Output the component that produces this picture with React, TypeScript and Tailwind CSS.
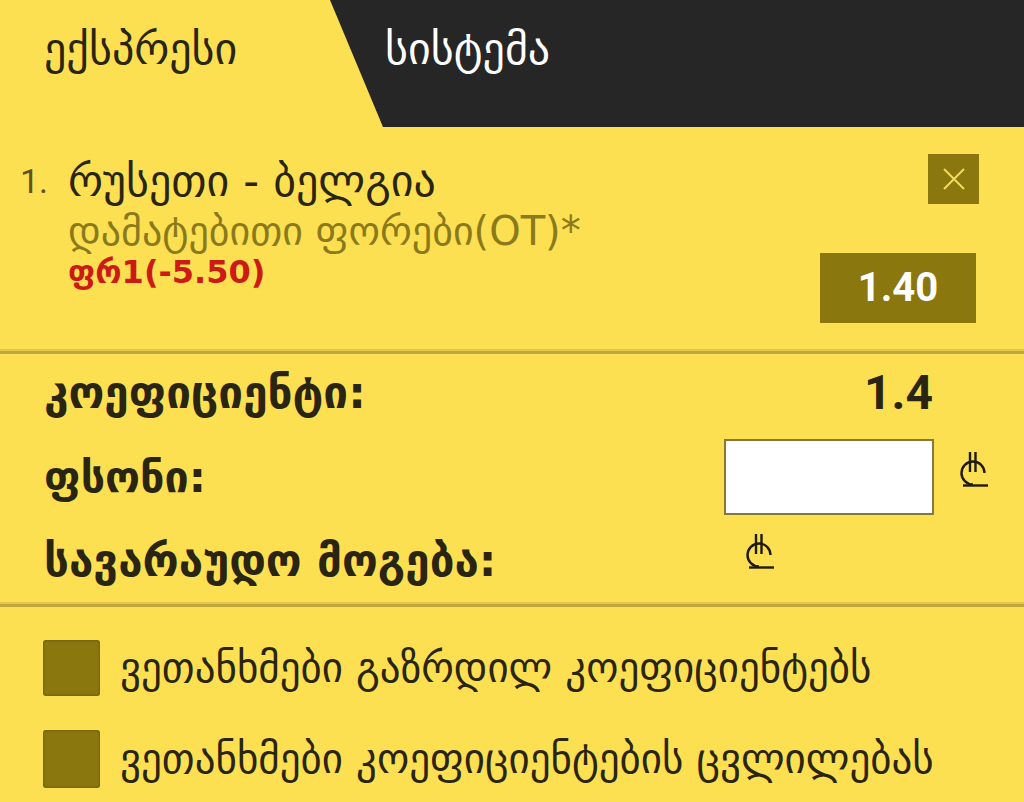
import React from "react";

const geo = { fontFamily: '"DejaVu Sans", sans-serif' };
const lat = { fontFamily: 'Roboto, "DejaVu Sans", sans-serif' };

function Lari({ className }: { className?: string }) {
  return (
    <svg className={className} viewBox="0 0 34 36" fill="none" stroke="#1e1a08" strokeWidth="2.4" strokeLinecap="butt">
      <path d="M28.5 22 A11.5 11.5 0 1 0 17 33.5" />
      <path d="M14 1 V21" />
      <path d="M19.5 1 V21" />
      <path d="M7 34.5 H32" />
    </svg>
  );
}

export default function App() {
  return (
    <div className="w-[1024px] h-[802px] bg-[#fde052] overflow-hidden text-[#2a2510]" style={geo}>
      {/* Header */}
      <div className="flex h-[127px]">
        <div className="w-[330px] pl-[44px] pt-[24px] text-[44px] leading-[50px] text-[#2a2510]">ექსპრესი</div>
        <div className="flex-1 bg-[#262626] [clip-path:polygon(0_0,100%_0,100%_100%,53px_100%)] pl-[55px] pt-[24px] text-[44px] leading-[50px] text-white">
          სისტემა
        </div>
      </div>

      {/* Bet item */}
      <div className="flex pl-[20px] pr-[45px] pt-[29px] h-[222px]">
        <div className="flex-1 flex">
          <div className="w-[48px] text-[34px] leading-[50px] text-[#5c5424]" style={lat}>1.</div>
          <div className="flex flex-col">
            <div className="text-[44px] leading-[50px] text-[#2a2510]">რუსეთი - ბელგია</div>
            <div className="text-[40px] leading-[46px] text-[#8a7a1c] mt-[2px]">დამატებითი ფორები(OT)*</div>
            <div className="text-[32px] leading-[36px] font-bold text-[#cc1b14]">ფრ1(-5.50)</div>
          </div>
        </div>
        <div className="flex flex-col items-end">
          <div className="mt-[-2px] w-[51px] h-[50px] bg-[#8a770e] flex items-center justify-center">
            <svg width="24" height="24" viewBox="0 0 24 24" stroke="#f2db5c" strokeWidth="2">
              <path d="M2 2 L22 22 M22 2 L2 22" />
            </svg>
          </div>
          <div className="mt-[49px] mr-[3px] w-[156px] h-[70px] bg-[#8a770e] flex items-center justify-center text-white text-[40px] font-bold" style={lat}>
            1.40
          </div>
        </div>
      </div>

      {/* Divider */}
      <div className="h-[2px] bg-[#e0c64c]" />
      <div className="h-[3px] bg-[#c1a83c]" />

      {/* Totals */}
      <div className="h-[248px] pl-[44px] pr-[34px] pt-[10px] flex flex-col">
        <div className="flex items-center h-[58px]">
          <div className="flex-1 text-[44px] font-bold">კოეფიციენტი:</div>
          <div className="w-[100px] text-right mr-[57px] text-[48px] font-bold" style={lat}>1.4</div>
        </div>
        <div className="flex items-center h-[110px]">
          <div className="flex-1 text-[43px] font-bold">ფსონი:</div>
          <div className="w-[210px] h-[76px] bg-white border-2 border-[#85783a]" />
          <Lari className="w-[34px] h-[36px] ml-[22px] mb-[16px]" />
        </div>
        <div className="flex items-center h-[58px]">
          <div className="w-[698px] text-[44px] font-bold">სავარაუდო მოგება:</div>
          <Lari className="w-[34px] h-[36px] mb-[20px]" />
        </div>
      </div>

      {/* Divider */}
      <div className="h-[2px] bg-[#e0c64c]" />
      <div className="h-[3px] bg-[#c1a83c]" />

      {/* Checkboxes */}
      <div className="pl-[43px] pt-[33px] flex flex-col gap-[34px]">
        <div className="flex items-center gap-[20px]">
          <div className="w-[57px] h-[56px] rounded-[3px] bg-[#8a770e] shadow-[inset_0_0_3px_rgba(0,0,0,0.35)]" />
          <div className="text-[41px] leading-[56px]">ვეთანხმები გაზრდილ კოეფიციენტებს</div>
        </div>
        <div className="flex items-center gap-[20px]">
          <div className="w-[57px] h-[58px] rounded-[3px] bg-[#8a770e] shadow-[inset_0_0_3px_rgba(0,0,0,0.35)]" />
          <div className="text-[41px] leading-[56px]">ვეთანხმები კოეფიციენტების ცვლილებას</div>
        </div>
      </div>
    </div>
  );
}
